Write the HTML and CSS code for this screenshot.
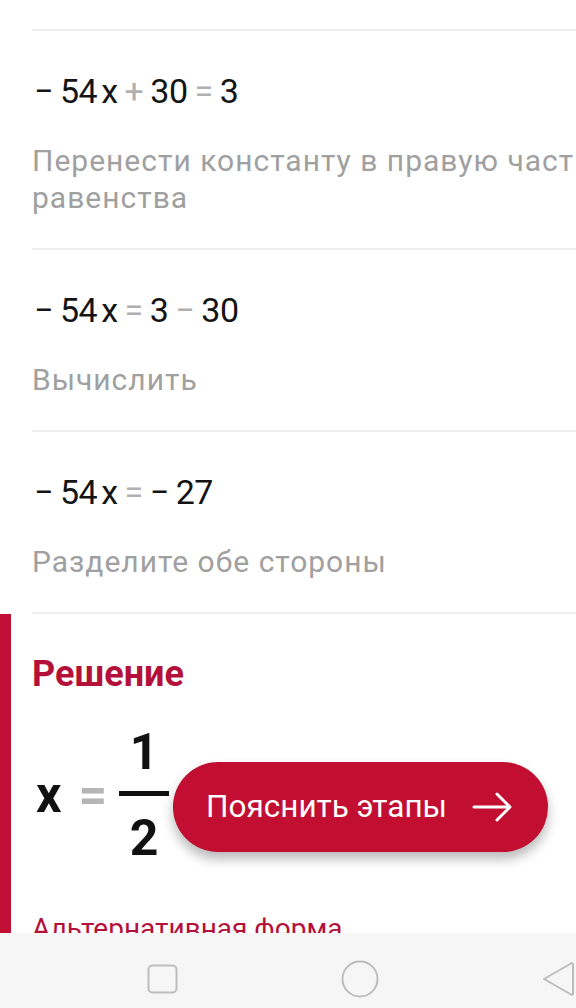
FILE: index.html
```html
<!DOCTYPE html>
<html lang="ru">
<head>
<meta charset="utf-8">
<link rel="stylesheet" href="styles.css">
</head>
<body>
<div class="page">
  <main class="content">
    <section class="steps">
      <div class="step">
        <div class="eq">
          <span class="t">−</span><span class="t">54</span><span class="t var">x</span><span class="t op">+</span><span class="t">30</span><span class="t op">=</span><span class="t">3</span>
        </div>
        <p class="desc">Перенести константу в правую часть равенства</p>
      </div>
      <div class="step">
        <div class="eq">
          <span class="t">−</span><span class="t">54</span><span class="t var">x</span><span class="t op">=</span><span class="t">3</span><span class="t op">−</span><span class="t">30</span>
        </div>
        <p class="desc">Вычислить</p>
      </div>
      <div class="step">
        <div class="eq">
          <span class="t">−</span><span class="t">54</span><span class="t var">x</span><span class="t op">=</span><span class="t">−</span><span class="t">27</span>
        </div>
        <p class="desc">Разделите обе стороны</p>
      </div>
    </section>
    <section class="solution">
      <h2 class="sol-title">Решение</h2>
      <div class="answer">
        <span class="a-var">x</span>
        <span class="a-eq">=</span>
        <span class="frac">
          <span class="num">1</span>
          <span class="bar"></span>
          <span class="den">2</span>
        </span>
      </div>
      <p class="alt">Альтернативная форма</p>
      <button class="fab">
        <span class="fab-text">Пояснить этапы</span>
        <svg class="fab-arrow" width="42" height="32" viewBox="0 0 42 32">
          <path d="M2 16 H38 M25 3 L38 16 L25 29" fill="none" stroke="#fff" stroke-width="3" stroke-linecap="round" stroke-linejoin="round"/>
        </svg>
      </button>
    </section>
  </main>
  <nav class="navbar">
    <svg class="nav-square" width="32" height="31" viewBox="0 0 32 31">
      <rect x="1.5" y="1.5" width="28" height="27" rx="4" fill="none" stroke="#bdbdbd" stroke-width="2"/>
    </svg>
    <svg class="nav-circle" width="38" height="38" viewBox="0 0 38 38">
      <circle cx="19" cy="19" r="17.5" fill="none" stroke="#bdbdbd" stroke-width="2"/>
    </svg>
    <svg class="nav-back" width="36" height="38" viewBox="0 0 36 38">
      <path d="M4 19 L31 3.5 Q33 2.5 33 5 V33 Q33 35.5 31 34.5 Z" fill="none" stroke="#bdbdbd" stroke-width="2" stroke-linejoin="round"/>
    </svg>
  </nav>
</div>
</body>
</html>
```

FILE: styles.css
```css
* {
  box-sizing: border-box;
}

html, body {
  margin: 0;
  padding: 0;
  background: #ffffff;
}

body {
  font-family: Roboto, "Noto Sans", sans-serif;
  color: #111111;
}

.page {
  width: 576px;
  height: 1008px;
  display: flex;
  flex-direction: column;
  overflow: hidden;
}

.content {
  position: relative;
  height: 933px;
  flex: none;
  overflow: hidden;
  padding-top: 29px;
}

.steps {
  margin-left: 32px;
  border-bottom: 2px solid #eeeeee;
}

.step {
  border-top: 2px solid #eeeeee;
  padding: 40px 0 32px 0;
}

.eq {
  display: flex;
  align-items: baseline;
  gap: 7px;
  height: 40px;
  font-size: 34px;
  line-height: 40px;
  letter-spacing: -0.5px;
  color: #141414;
  padding-left: 2px;
}

.eq .var {
  margin-left: -3px;
}

.eq .op {
  color: #b0b0b0;
}

.desc {
  margin: 31px 0 0 0;
  font-size: 30px;
  letter-spacing: 1px;
  line-height: 37px;
  color: #a0a0a0;
  width: 600px;
}

.solution {
  border-left: 11px solid #c20f36;
  padding: 38px 0 0 21px;
  height: 400px;
}

.sol-title {
  margin: 0;
  font-size: 36px;
  line-height: 44px;
  font-weight: 700;
  color: #b3113a;
}

.answer {
  margin-top: 36px;
  display: flex;
  align-items: center;
  font-size: 50px;
  font-weight: 700;
  line-height: 40px;
}

.a-var {
  color: #111111;
  margin-left: 4px;
}

.a-eq {
  color: #b5b5b5;
  margin-left: 17px;
}

.frac {
  display: flex;
  flex-direction: column;
  align-items: center;
  margin-left: 12px;
  color: #111111;
}

.num,
.den {
  display: block;
  line-height: 40px;
}

.bar {
  display: block;
  width: 50px;
  height: 5px;
  background: #111111;
  margin: 19px 0 22px 0;
}

.alt {
  margin: 52px 0 0 0;
  font-size: 28px;
  line-height: 37px;
  color: #b3113a;
}

.fab {
  position: absolute;
  left: 173px;
  top: 762px;
  width: 375px;
  height: 90px;
  border: none;
  border-radius: 45px;
  background: #c10e31;
  box-shadow: 0 7px 12px rgba(0, 0, 0, 0.28);
  display: flex;
  align-items: center;
  padding: 0 0 0 33px;
  font-family: Roboto, "Noto Sans", sans-serif;
  cursor: pointer;
}

.fab-text {
  color: #ffffff;
  font-size: 31.5px;
  line-height: 40px;
}

.fab-arrow {
  margin-left: 25px;
}

.navbar {
  flex: none;
  height: 75px;
  background: #f6f6f6;
  display: flex;
  align-items: center;
  padding: 17px 0 0 147px;
}

.nav-circle {
  margin-left: 162px;
}

.nav-back {
  margin-left: 161px;
}
```
